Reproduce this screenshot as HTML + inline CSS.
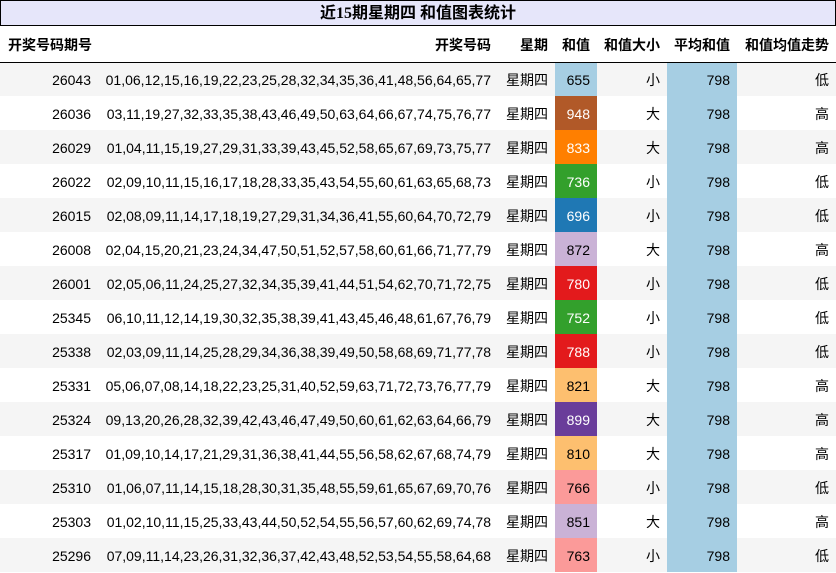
<!DOCTYPE html>
<html><head><meta charset="utf-8"><style>
body{margin:0;width:836px;height:573px;overflow:hidden;background:#fff;font-family:"Liberation Sans","Noto Sans CJK SC",sans-serif;font-size:14px;color:#000}
.title{position:absolute;left:0;top:0;width:834px;height:24px;border:1px solid #000;background:#e6e6fa;text-align:center;font-weight:bold;font-size:16px;line-height:26px;font-family:"Liberation Serif","Noto Sans CJK SC",sans-serif}
table{position:absolute;left:0;top:26px;border-collapse:collapse;table-layout:fixed;width:836px}
td,th{padding:2px 7px 0 0;text-align:right;white-space:nowrap;overflow:hidden;box-sizing:border-box}
th{height:36px;font-weight:bold;border-bottom:1px solid #000}
th:first-child{text-align:left;padding-left:8px}
td{height:34px}
tr:nth-child(even) td{background:#f5f5f5}
td.a{background:#a6cee3!important}
</style></head><body>
<div class="title">近15期星期四 和值图表统计</div>
<table>
<colgroup><col style="width:98px"><col style="width:400px"><col style="width:57px"><col style="width:42px"><col style="width:70px"><col style="width:70px"><col style="width:99px"></colgroup>
<tr><th>开奖号码期号</th><th>开奖号码</th><th>星期</th><th>和值</th><th>和值大小</th><th>平均和值</th><th>和值均值走势</th></tr>
<tr><td>26043</td><td>01,06,12,15,16,19,22,23,25,28,32,34,35,36,41,48,56,64,65,77</td><td>星期四</td><td style="background:#a6cee3">655</td><td>小</td><td class="a">798</td><td>低</td></tr>
<tr><td>26036</td><td>03,11,19,27,32,33,35,38,43,46,49,50,63,64,66,67,74,75,76,77</td><td>星期四</td><td style="background:#b15928;color:#fff">948</td><td>大</td><td class="a">798</td><td>高</td></tr>
<tr><td>26029</td><td>01,04,11,15,19,27,29,31,33,39,43,45,52,58,65,67,69,73,75,77</td><td>星期四</td><td style="background:#ff7f00!important;color:#fff">833</td><td>大</td><td class="a">798</td><td>高</td></tr>
<tr><td>26022</td><td>02,09,10,11,15,16,17,18,28,33,35,43,54,55,60,61,63,65,68,73</td><td>星期四</td><td style="background:#33a02c;color:#fff">736</td><td>小</td><td class="a">798</td><td>低</td></tr>
<tr><td>26015</td><td>02,08,09,11,14,17,18,19,27,29,31,34,36,41,55,60,64,70,72,79</td><td>星期四</td><td style="background:#1f78b4!important;color:#fff">696</td><td>小</td><td class="a">798</td><td>低</td></tr>
<tr><td>26008</td><td>02,04,15,20,21,23,24,34,47,50,51,52,57,58,60,61,66,71,77,79</td><td>星期四</td><td style="background:#cab2d6">872</td><td>大</td><td class="a">798</td><td>高</td></tr>
<tr><td>26001</td><td>02,05,06,11,24,25,27,32,34,35,39,41,44,51,54,62,70,71,72,75</td><td>星期四</td><td style="background:#e31a1c!important;color:#fff">780</td><td>小</td><td class="a">798</td><td>低</td></tr>
<tr><td>25345</td><td>06,10,11,12,14,19,30,32,35,38,39,41,43,45,46,48,61,67,76,79</td><td>星期四</td><td style="background:#33a02c;color:#fff">752</td><td>小</td><td class="a">798</td><td>低</td></tr>
<tr><td>25338</td><td>02,03,09,11,14,25,28,29,34,36,38,39,49,50,58,68,69,71,77,78</td><td>星期四</td><td style="background:#e31a1c!important;color:#fff">788</td><td>小</td><td class="a">798</td><td>低</td></tr>
<tr><td>25331</td><td>05,06,07,08,14,18,22,23,25,31,40,52,59,63,71,72,73,76,77,79</td><td>星期四</td><td style="background:#fdbf6f">821</td><td>大</td><td class="a">798</td><td>高</td></tr>
<tr><td>25324</td><td>09,13,20,26,28,32,39,42,43,46,47,49,50,60,61,62,63,64,66,79</td><td>星期四</td><td style="background:#6a3d9a!important;color:#fff">899</td><td>大</td><td class="a">798</td><td>高</td></tr>
<tr><td>25317</td><td>01,09,10,14,17,21,29,31,36,38,41,44,55,56,58,62,67,68,74,79</td><td>星期四</td><td style="background:#fdbf6f">810</td><td>大</td><td class="a">798</td><td>高</td></tr>
<tr><td>25310</td><td>01,06,07,11,14,15,18,28,30,31,35,48,55,59,61,65,67,69,70,76</td><td>星期四</td><td style="background:#fb9a99!important">766</td><td>小</td><td class="a">798</td><td>低</td></tr>
<tr><td>25303</td><td>01,02,10,11,15,25,33,43,44,50,52,54,55,56,57,60,62,69,74,78</td><td>星期四</td><td style="background:#cab2d6">851</td><td>大</td><td class="a">798</td><td>高</td></tr>
<tr><td>25296</td><td>07,09,11,14,23,26,31,32,36,37,42,43,48,52,53,54,55,58,64,68</td><td>星期四</td><td style="background:#fb9a99!important">763</td><td>小</td><td class="a">798</td><td>低</td></tr>
</table>
</body></html>
